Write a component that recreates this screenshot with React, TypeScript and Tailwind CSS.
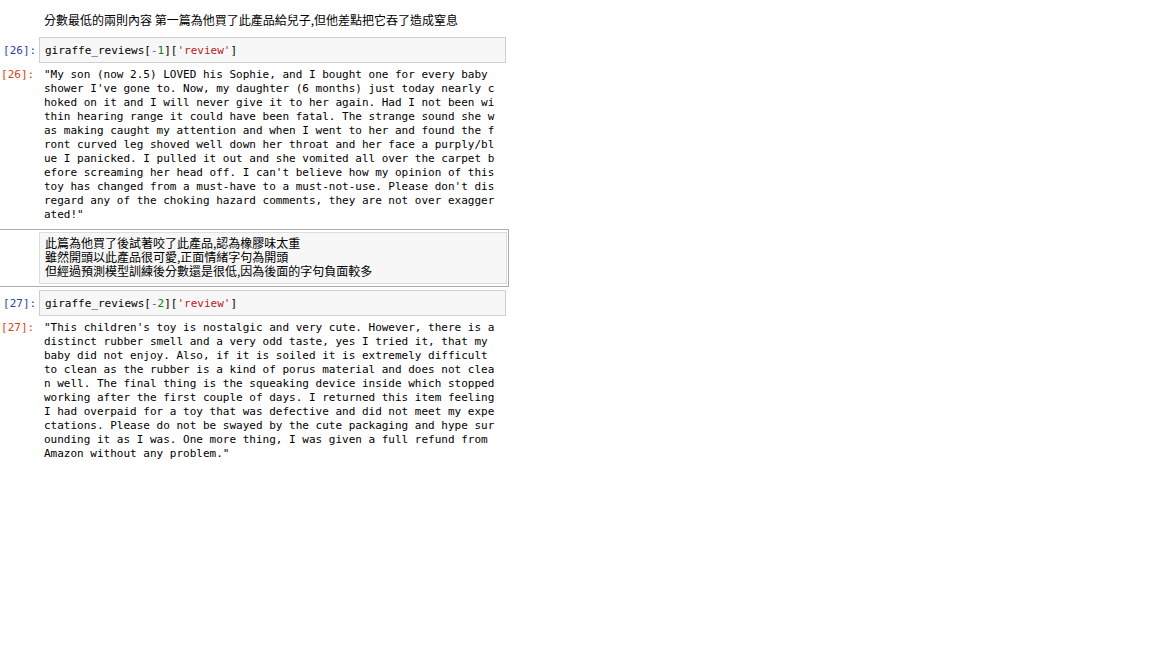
import React from 'react';

const mono = "font-['DejaVu_Sans_Mono',monospace] text-[11px] leading-[14px]";
const cjk = "font-['Noto_Sans_CJK_TC',sans-serif] text-[12px] leading-[14px] text-black";

const review1 = [
  '"My son (now 2.5) LOVED his Sophie, and I bought one for every baby',
  "shower I've gone to. Now, my daughter (6 months) just today nearly c",
  'hoked on it and I will never give it to her again. Had I not been wi',
  'thin hearing range it could have been fatal. The strange sound she w',
  'as making caught my attention and when I went to her and found the f',
  'ront curved leg shoved well down her throat and her face a purply/bl',
  'ue I panicked. I pulled it out and she vomited all over the carpet b',
  "efore screaming her head off. I can't believe how my opinion of this",
  "toy has changed from a must-have to a must-not-use. Please don't dis",
  'regard any of the choking hazard comments, they are not over exagger',
  'ated!"',
];

const review2 = [
  '"This children\'s toy is nostalgic and very cute. However, there is a',
  'distinct rubber smell and a very odd taste, yes I tried it, that my',
  'baby did not enjoy. Also, if it is soiled it is extremely difficult',
  'to clean as the rubber is a kind of porus material and does not clea',
  'n well. The final thing is the squeaking device inside which stopped',
  'working after the first couple of days. I returned this item feeling',
  'I had overpaid for a toy that was defective and did not meet my expe',
  'ctations. Please do not be swayed by the cute packaging and hype sur',
  'ounding it as I was. One more thing, I was given a full refund from',
  'Amazon without any problem."',
];

const InputCell = ({ n, idx }: { n: number; idx: string }) => (
  <div className="flex h-[26px]">
    <div className={`${mono} w-[39px] pl-[3px] pt-[2px] flex items-center text-[#303f9f]`}>[{n}]:</div>
    <div className={`${mono} w-[467px] border border-[#cfcfcf] bg-[#f7f7f7] pl-[5px] pt-[2px] flex items-center text-black whitespace-pre`}>
      giraffe_reviews[<span className="text-[#aa22ff]">-</span>
      <span className="text-[#008800]">{idx}</span>][<span className="text-[#ba2121]">'review'</span>]
    </div>
  </div>
);

const OutputCell = ({ n, lines }: { n: number; lines: string[] }) => (
  <div className="flex">
    <div className={`${mono} w-[39px] pl-[1px] text-[#d84315]`}>[{n}]:</div>
    <div className={`${mono} pl-[5px] text-black whitespace-pre`}>
      {lines.map((l, i) => (
        <div key={i}>{l}</div>
      ))}
    </div>
  </div>
);

export default function App() {
  return (
    <div className="w-[1152px] h-[648px] bg-white pt-[13px]">
      <div className={`${cjk} pl-[44px]`}>分數最低的兩則內容 第一篇為他買了此產品給兒子,但他差點把它吞了造成窒息</div>
      <div className="mt-[10px]">
        <InputCell n={26} idx="1" />
      </div>
      <div className="mt-[5px]">
        <OutputCell n={26} lines={review1} />
      </div>
      <div className="mt-[7px] w-[509px] border-t border-r border-b border-[#ababab] py-[2px] pl-[39px] pr-[1px]">
        <div className={`${cjk} border border-[#dddddd] bg-[#f7f7f7] pl-[5px] pt-[3px] pb-[5px]`}>
          <div>此篇為他買了後試著咬了此產品,認為橡膠味太重</div>
          <div>雖然開頭以此產品很可愛,正面情緒字句為開頭</div>
          <div>但經過預測模型訓練後分數還是很低,因為後面的字句負面較多</div>
        </div>
      </div>
      <div className="mt-[3px]">
        <InputCell n={27} idx="2" />
      </div>
      <div className="mt-[5px]">
        <OutputCell n={27} lines={review2} />
      </div>
    </div>
  );
}
